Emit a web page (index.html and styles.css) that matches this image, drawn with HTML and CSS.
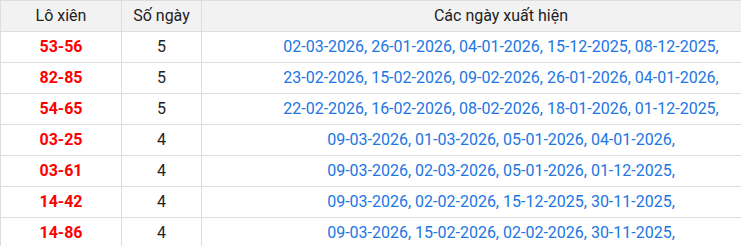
FILE: index.html
```html
<!DOCTYPE html>
<html lang="vi">
<head>
<meta charset="utf-8">
<link rel="stylesheet" href="styles.css">
</head>
<body>
<div class="scroller">
<table class="stats">
  <thead>
    <tr><th class="c1">Lô xiên</th><th class="c2">Số ngày</th><th class="c3">Các ngày xuất hiện</th></tr>
  </thead>
  <tbody>
    <tr><td class="pair">53-56</td><td class="count">5</td><td class="dates">02-03-2026, 26-01-2026, 04-01-2026, 15-12-2025, 08-12-2025,</td></tr>
    <tr><td class="pair">82-85</td><td class="count">5</td><td class="dates">23-02-2026, 15-02-2026, 09-02-2026, 26-01-2026, 04-01-2026,</td></tr>
    <tr><td class="pair">54-65</td><td class="count">5</td><td class="dates">22-02-2026, 16-02-2026, 08-02-2026, 18-01-2026, 01-12-2025,</td></tr>
    <tr><td class="pair">03-25</td><td class="count">4</td><td class="dates">09-03-2026, 01-03-2026, 05-01-2026, 04-01-2026,</td></tr>
    <tr><td class="pair">03-61</td><td class="count">4</td><td class="dates">09-03-2026, 02-03-2026, 05-01-2026, 01-12-2025,</td></tr>
    <tr><td class="pair">14-42</td><td class="count">4</td><td class="dates">09-03-2026, 02-02-2026, 15-12-2025, 30-11-2025,</td></tr>
    <tr><td class="pair">14-86</td><td class="count">4</td><td class="dates">09-03-2026, 15-02-2026, 02-02-2026, 30-11-2025,</td></tr>
  </tbody>
</table>
</div>
</body>
</html>
```
FILE: styles.css
```css
html, body {
  margin: 0;
  padding: 0;
  overflow: hidden;
  background: #fff;
}
body {
  font-family: Roboto, "Liberation Sans", sans-serif;
  font-size: 16px;
  color: #222;
}
.scroller {
  width: 741px;
  overflow: hidden;
}
.stats {
  border-collapse: collapse;
  width: 801px;
  table-layout: fixed;
}
.stats th, .stats td {
  border: 1px solid #dddddd;
  height: 31px;
  padding: 0 4px;
  text-align: center;
  vertical-align: middle;
  line-height: 20px;
  box-sizing: border-box;
}
.stats th {
  background: #f2f2f2;
  font-weight: normal;
  color: #222;
}
.stats .c1 { width: 121px; }
.stats .c2 { width: 80px; }
.pair {
  color: #ff0000;
  font-weight: bold;
}
.count { color: #222; }
.dates { color: #2176e3; }
```
